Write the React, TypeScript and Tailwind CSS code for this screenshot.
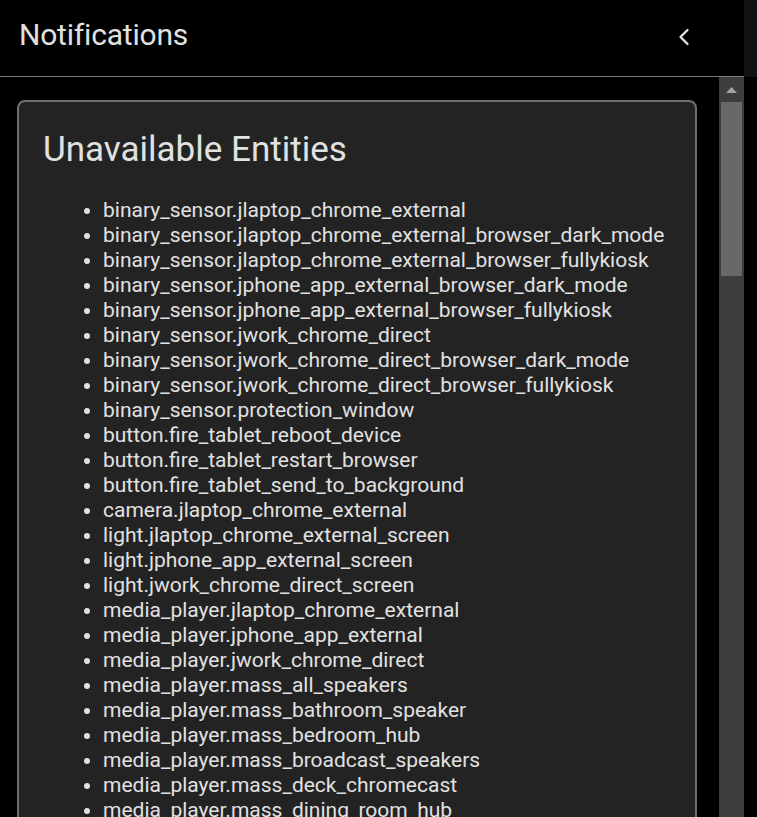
import { ChevronLeft } from 'lucide-react';

const ENTITIES = [
  'binary_sensor.jlaptop_chrome_external',
  'binary_sensor.jlaptop_chrome_external_browser_dark_mode',
  'binary_sensor.jlaptop_chrome_external_browser_fullykiosk',
  'binary_sensor.jphone_app_external_browser_dark_mode',
  'binary_sensor.jphone_app_external_browser_fullykiosk',
  'binary_sensor.jwork_chrome_direct',
  'binary_sensor.jwork_chrome_direct_browser_dark_mode',
  'binary_sensor.jwork_chrome_direct_browser_fullykiosk',
  'binary_sensor.protection_window',
  'button.fire_tablet_reboot_device',
  'button.fire_tablet_restart_browser',
  'button.fire_tablet_send_to_background',
  'camera.jlaptop_chrome_external',
  'light.jlaptop_chrome_external_screen',
  'light.jphone_app_external_screen',
  'light.jwork_chrome_direct_screen',
  'media_player.jlaptop_chrome_external',
  'media_player.jphone_app_external',
  'media_player.jwork_chrome_direct',
  'media_player.mass_all_speakers',
  'media_player.mass_bathroom_speaker',
  'media_player.mass_bedroom_hub',
  'media_player.mass_broadcast_speakers',
  'media_player.mass_deck_chromecast',
  'media_player.mass_dining_room_hub',
  'media_player.mass_kitchen_display',
  'media_player.mass_living_room_tv',
];

export default function App() {
  return (
    <div
      className="flex h-[817px] w-[757px] flex-col overflow-hidden bg-black text-[#e1e1e1]"
      style={{ fontFamily: 'Roboto, "Liberation Sans", sans-serif' }}
    >
      {/* Header */}
      <div className="flex h-[77px] shrink-0">
        <div className="flex w-[744px] items-center justify-between border-b border-[#7a7a7a] pb-[6px] pl-[19px] pr-[46px]">
          <h1 className="text-[30px] font-normal leading-none tracking-[-0.2px] text-[#e1e1e1]">Notifications</h1>
          <ChevronLeft className="mt-[3px] h-[28px] w-[28px] text-[#e1e1e1]" strokeWidth={2} />
        </div>
        <div className="w-[13px] bg-[#111111]" />
      </div>

      {/* Body */}
      <div className="flex min-h-0 flex-1">
        <div className="flex-1 overflow-hidden pl-[17px] pr-[22px] pt-[23px]">
          <div className="rounded-[8px] border-2 border-[#6f6f6f] bg-[#232323] px-6 pt-[28px]">
            <h2 className="text-[35px] font-normal leading-[40px] text-[#e1e1e1]">Unavailable Entities</h2>
            <ul className="mt-[28px] list-disc pl-[60px] text-[21px] leading-[25px] marker:text-[#e1e1e1]">
              {ENTITIES.map((e) => (
                <li key={e}>{e}</li>
              ))}
            </ul>
          </div>
        </div>

        {/* Scrollbar */}
        <div className="flex w-[25px] flex-col bg-[#3d3d3d] px-[2px]">
          <div className="flex h-[25px] items-center justify-center">
            <svg width="11" height="6" viewBox="0 0 11 6" aria-hidden>
              <polygon points="5.5,0 11,6 0,6" fill="#a3a3a3" />
            </svg>
          </div>
          <div className="h-[174px] bg-[#686868]" />
        </div>
        <div className="w-[13px] bg-black" />
      </div>
    </div>
  );
}
